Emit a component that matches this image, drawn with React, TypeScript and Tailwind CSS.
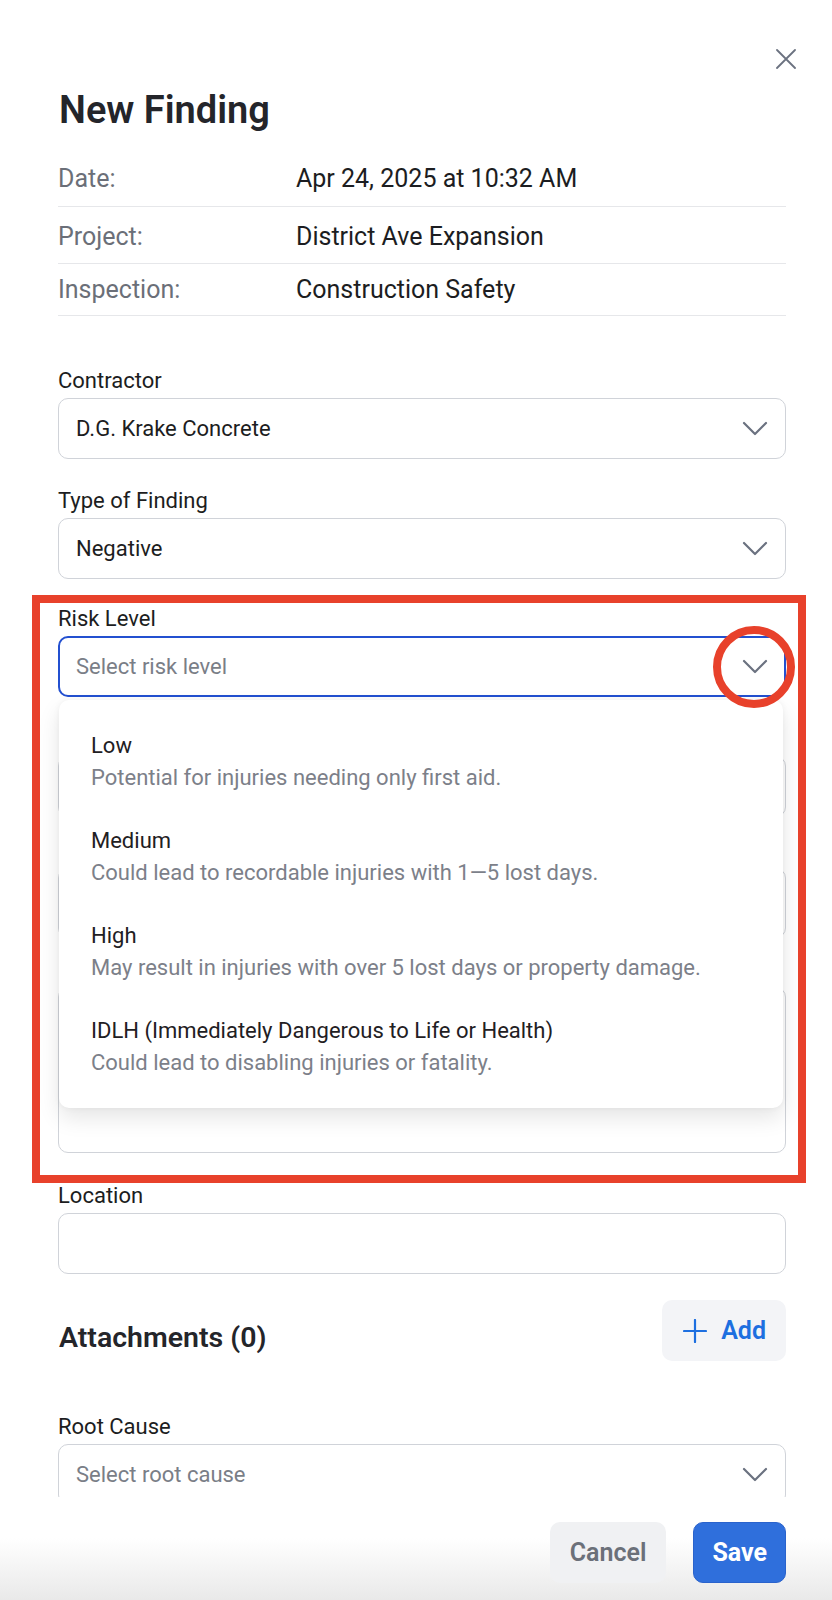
import React from "react";

const Chevron = () => (
  <svg width="26" height="15" viewBox="0 0 26 15" fill="none" className="shrink-0">
    <path d="M2 2 L13 13 L24 2" stroke="#6b7280" strokeWidth="2.2" strokeLinecap="round" strokeLinejoin="round" />
  </svg>
);

const CloseIcon = () => (
  <svg width="20" height="20" viewBox="0 0 20 20" fill="none">
    <path d="M1 1 L19 19 M19 1 L1 19" stroke="#6b7280" strokeWidth="1.8" strokeLinecap="round" />
  </svg>
);

const PlusIcon = () => (
  <svg width="24" height="24" viewBox="0 0 24 24" fill="none" className="shrink-0">
    <path d="M12 1 V23 M1 12 H23" stroke="#1d6fe0" strokeWidth="2.2" strokeLinecap="round" />
  </svg>
);

const options = [
  { title: "Low", desc: "Potential for injuries needing only first aid." },
  { title: "Medium", desc: "Could lead to recordable injuries with 1—5 lost days." },
  { title: "High", desc: "May result in injuries with over 5 lost days or property damage." },
  { title: "IDLH (Immediately Dangerous to Life or Health)", desc: "Could lead to disabling injuries or fatality." },
];

export default function App() {
  return (
    <div className="relative h-[1600px] w-full overflow-hidden bg-white font-['Roboto','Liberation_Sans',sans-serif]">
      <div className="flex h-full flex-col">
        <div className="h-[1497px] shrink-0 overflow-hidden pl-[58px] pr-[46px] pt-[49px]">
          <div className="flex h-[20px] justify-end">
            <div className="-mr-[10px]">
              <CloseIcon />
            </div>
          </div>
          <h1 className="mt-[19px] pl-[1px] text-[38px] font-semibold leading-[44px] text-[#24252a]">New Finding</h1>

          <div className="mt-[20px] text-[25px] leading-[32px]">
            <div className="flex h-[55px] items-center border-b border-[#e6e7ea]">
              <span className="w-[238px] text-[#6b6f78]">Date:</span>
              <span className="text-[#1c1d21]">Apr 24, 2025 at 10:32 AM</span>
            </div>
            <div className="flex h-[57px] items-center border-b border-[#e6e7ea] pt-[3px]">
              <span className="w-[238px] text-[#6b6f78]">Project:</span>
              <span className="text-[#1c1d21]">District Ave Expansion</span>
            </div>
            <div className="flex h-[52px] items-center border-b border-[#e6e7ea]">
              <span className="w-[238px] text-[#6b6f78]">Inspection:</span>
              <span className="text-[#1c1d21]">Construction Safety</span>
            </div>
          </div>

          <div className="text-[22px]">
            <div className="mt-[51px]">
              <div className="h-[28px] leading-[28px] text-[#1c1d21]">Contractor</div>
              <div className="mt-[3px] flex h-[61px] items-center justify-between rounded-[10px] border border-[#d0d3d9] bg-white pl-[17px] pr-[17px]">
                <span className="text-[#1c1d21]">D.G. Krake Concrete</span>
                <Chevron />
              </div>
            </div>

            <div className="mt-[28px]">
              <div className="h-[28px] leading-[28px] text-[#1c1d21]">Type of Finding</div>
              <div className="mt-[3px] flex h-[61px] items-center justify-between rounded-[10px] border border-[#d0d3d9] bg-white pl-[17px] pr-[17px]">
                <span className="text-[#1c1d21]">Negative</span>
                <Chevron />
              </div>
            </div>

            <div className="relative z-10 mt-[26px]">
              <div className="h-[28px] leading-[28px] text-[#1c1d21]">Risk Level</div>
              <div className="mt-[3px] flex h-[61px] items-center justify-between rounded-[10px] border-2 border-[#2350d0] bg-white pl-[16px] pr-[16px]">
                <span className="text-[#7a7e87]">Select risk level</span>
                <Chevron />
              </div>
              <div className="absolute left-[1px] right-[3px] top-[calc(100%+3px)] rounded-[10px] bg-white py-[14px] shadow-[0_10px_22px_rgba(0,0,0,0.10),0_0_6px_rgba(0,0,0,0.05)]">
                {options.map((o) => (
                  <div key={o.title} className="flex h-[95px] flex-col justify-center pl-[32px]">
                    <div className="leading-[32px] text-[#1f2023]">{o.title}</div>
                    <div className="leading-[32px] text-[#7c8089]">{o.desc}</div>
                  </div>
                ))}
              </div>
            </div>

            <div className="mt-[28px]">
              <div className="h-[28px]" />
              <div className="mt-[3px] h-[61px] rounded-[10px] border border-[#d0d3d9] bg-white" />
            </div>

            <div className="mt-[20px]">
              <div className="h-[28px]" />
              <div className="mt-[3px] h-[70px] rounded-[10px] border border-[#d0d3d9] bg-white" />
            </div>

            <div className="mt-[18px]">
              <div className="h-[28px]" />
              <div className="mt-[3px] h-[166px] rounded-[10px] border border-[#d0d3d9] bg-white" />
            </div>

            <div className="mt-[29px]">
              <div className="h-[28px] leading-[28px] text-[#1c1d21]">Location</div>
              <div className="mt-[3px] h-[61px] rounded-[10px] border border-[#d0d3d9] bg-white" />
            </div>
          </div>

          <div className="mt-[26px] flex items-start justify-between">
            <h2 className="mt-[20px] pl-[1px] text-[28.5px] font-semibold leading-[36px] text-[#24252a]">Attachments (0)</h2>
            <button className="flex h-[61px] items-center gap-[14px] rounded-[10px] bg-[#f3f4f7] pl-[21px] pr-[20px] text-[25px] font-semibold text-[#1d6fe0]">
              <PlusIcon />
              Add
            </button>
          </div>

          <div className="mt-[52px] text-[22px]">
            <div className="h-[28px] leading-[28px] text-[#1c1d21]">Root Cause</div>
            <div className="mt-[3px] flex h-[61px] items-center justify-between rounded-[10px] border border-[#d0d3d9] bg-white pl-[17px] pr-[17px]">
              <span className="text-[#7a7e87]">Select root cause</span>
              <Chevron />
            </div>
          </div>
        </div>

        <footer className="flex h-[103px] items-start justify-end gap-[27px] bg-linear-to-b from-white from-40% to-[#e9e9e9] pr-[46px] pt-[25px]">
          <button className="h-[61px] rounded-[10px] bg-[#f0f1f3] px-[20px] text-[25px] font-semibold text-[#6b7079]">Cancel</button>
          <button className="h-[61px] rounded-[10px] border border-[#2a63cc] bg-[#2f6fdc] px-[18px] text-[25px] font-bold text-white">Save</button>
        </footer>
      </div>

      <div className="pointer-events-none absolute left-[32px] top-[595px] z-20 h-[588px] w-[774px] border-[8px] border-[#e8412b]" />
      <div className="pointer-events-none absolute left-[713px] top-[626px] z-20 h-[82px] w-[82px] rounded-full border-[8px] border-[#e8412b]" />
    </div>
  );
}
